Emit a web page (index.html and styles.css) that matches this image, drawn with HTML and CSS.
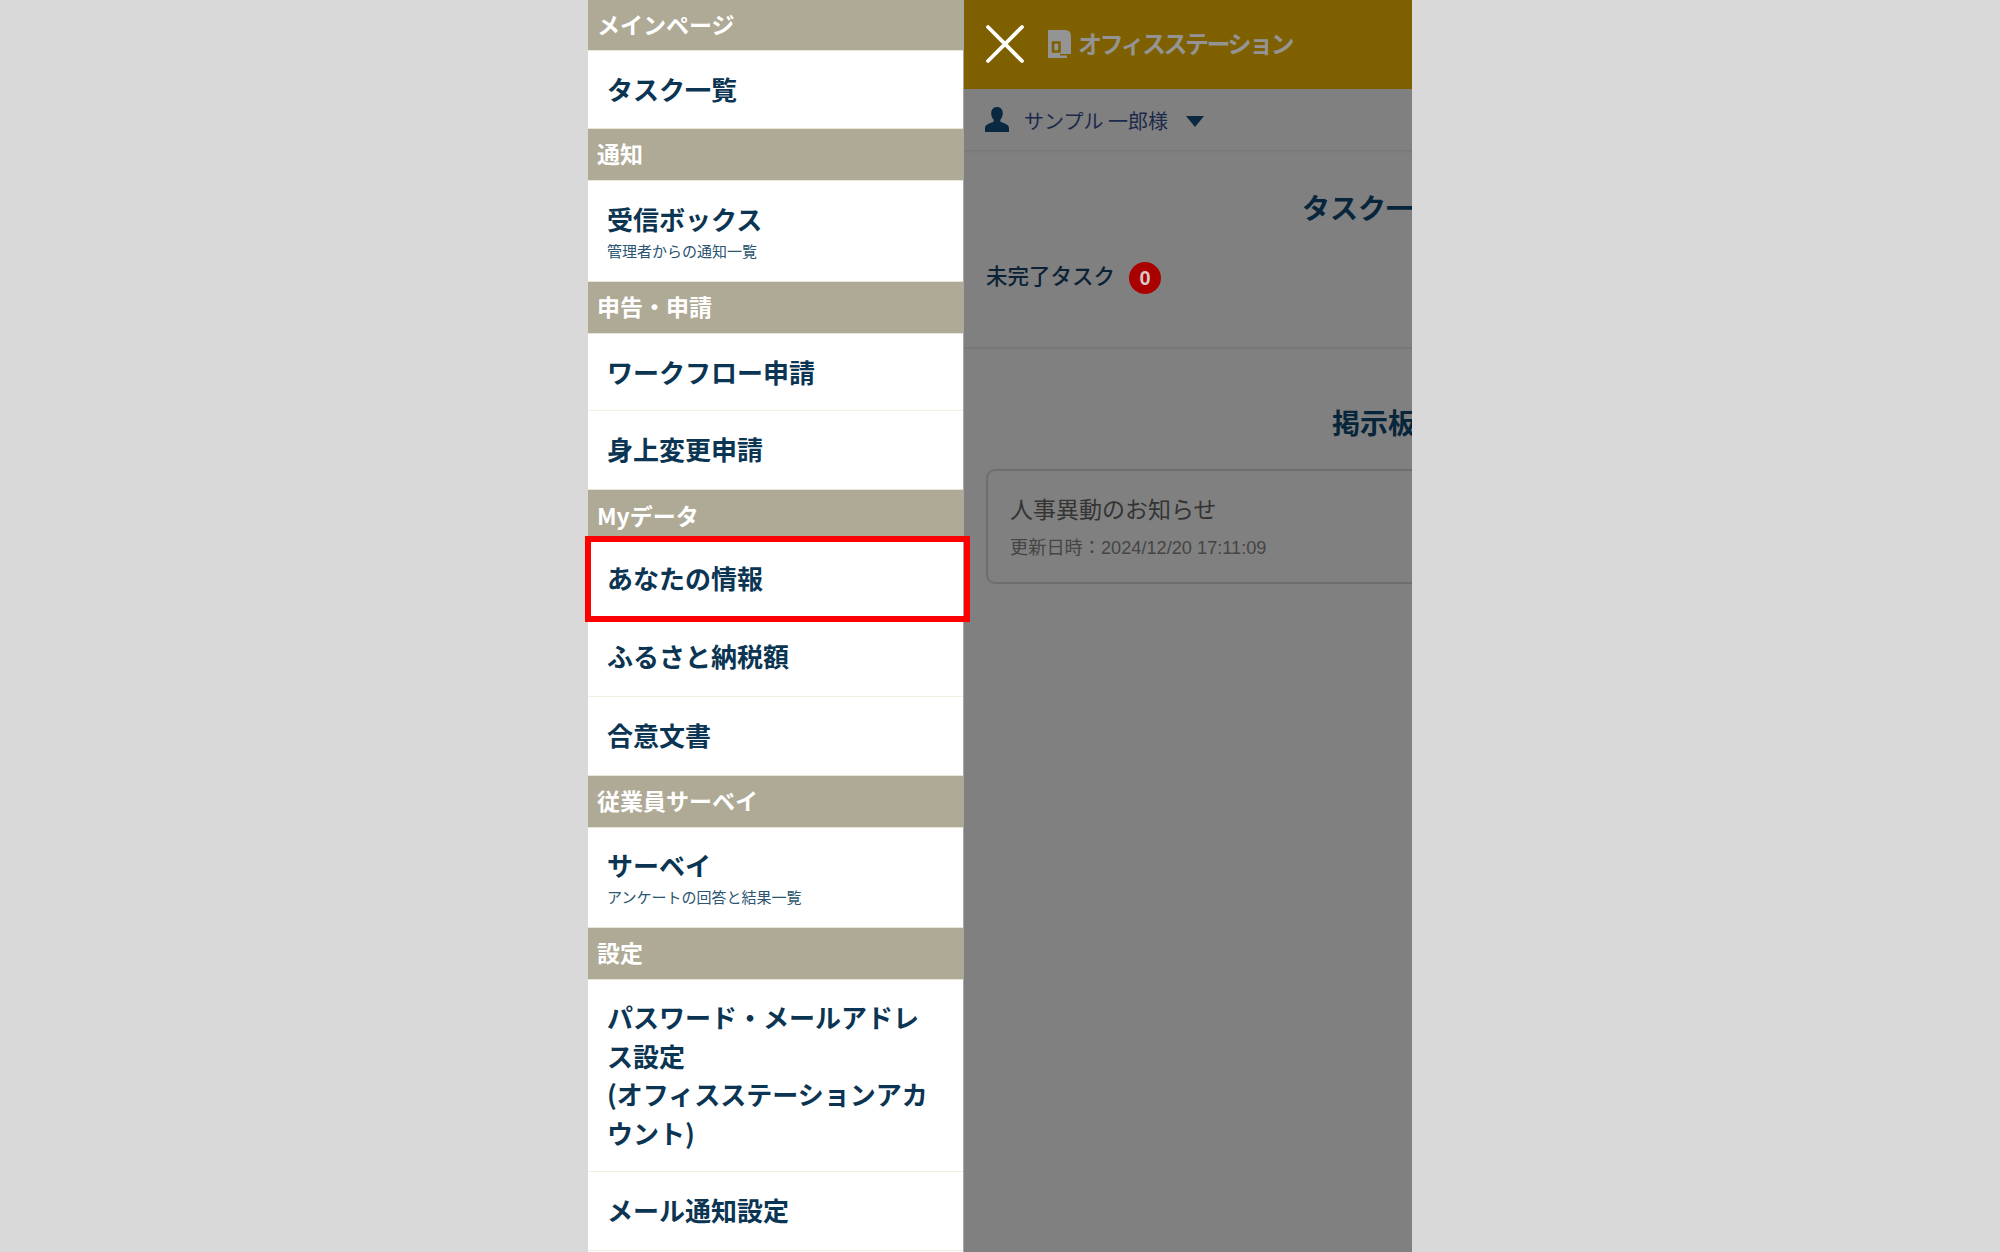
FILE: index.html
```html
<!DOCTYPE html>
<html lang="ja">
<head>
<meta charset="utf-8">
<title>オフィスステーション</title>
<link rel="stylesheet" href="styles.css">
</head>
<body>
<div class="page">
  <nav class="menu">
    <h2 class="sec sec-first">メインページ</h2>
    <a class="item h77">タスク一覧</a>
    <h2 class="sec">通知</h2>
    <a class="item item-sub h100"><span>受信ボックス</span><small>管理者からの通知一覧</small></a>
    <h2 class="sec">申告・申請</h2>
    <a class="item h77">ワークフロー申請</a>
    <a class="item h78">身上変更申請</a>
    <h2 class="sec sec-short">Myデータ</h2>
    <a class="item item-marked">あなたの情報</a>
    <a class="item h78">ふるさと納税額</a>
    <a class="item h78">合意文書</a>
    <h2 class="sec">従業員サーベイ</h2>
    <a class="item item-sub h99"><span>サーベイ</span><small>アンケートの回答と結果一覧</small></a>
    <h2 class="sec">設定</h2>
    <a class="item item-long">パスワード・メールアドレス設定<br>(オフィスステーションアカウント)</a>
    <a class="item h79">メール通知設定</a>
  </nav>
  <main class="main">
    <header class="top">
      <svg class="close" width="40" height="40" viewBox="0 0 40 40"><path d="M3 3L37 37M37 3L3 37" stroke="#fff" stroke-width="3.8" stroke-linecap="round"/></svg>
      <svg class="logo" width="24" height="29" viewBox="0 0 24 29"><path d="M0 0H17Q23 0 23 6V24H19V28H0Z" fill="#949494"/><path d="M5 12.500H11.500V21.500H5Z" fill="none" stroke="#7f6000" stroke-width="2.600"/><path d="M12 24H23V25.500H12Z" fill="#7f6000"/></svg>
      <span class="brand">オフィスステーション</span>
    </header>
    <div class="user">
      <svg class="person" width="24" height="25" viewBox="0 0 24 25"><path d="M12 0c3.600 0 5.800 2.700 5.800 6.200 0 2.800-1.100 5-2.400 6.300v2.300c3 1.300 8.600 2.400 8.600 6.200v4H0v-4c0-3.800 5.600-4.900 8.600-6.200v-2.300C7.300 11.200 6.200 9 6.200 6.200 6.200 2.700 8.400 0 12 0z" fill="#0a2840"/></svg>
      <span class="user-name">サンプル 一郎様</span>
      <svg class="caret" width="18" height="11" viewBox="0 0 18 11"><path d="M0 0h18L9 11z" fill="#0a2840"/></svg>
    </div>
    <div class="content">
      <section class="tasks">
        <h1 class="title">タスク一覧</h1>
        <div class="pending"><span class="pending-label">未完了タスク</span><b class="badge">0</b></div>
      </section>
      <section class="board">
        <h1 class="title">掲示板</h1>
        <div class="card">
          <p class="card-title">人事異動のお知らせ</p>
          <p class="card-date">更新日時：2024/12/20 17:11:09</p>
        </div>
      </section>
    </div>
  </main>
</div>
</body>
</html>
```
FILE: styles.css
```css
*, *::after { box-sizing: border-box; }
html, body { margin: 0; padding: 0; }
body {
  background: #d9d9d9;
  font-family: "Noto Sans CJK JP", "Liberation Sans", sans-serif;
}
.page {
  display: flex;
  height: 1252px;
  overflow: hidden;
  padding-left: 588px;
}
.menu {
  width: 376px;
  flex: none;
  background: #fff;
  border-right: 1px solid #a8a8a8;
}
.sec {
  margin: 0;
  height: 53px;
  padding-left: 9px;
  padding-bottom: 2px;
  display: flex;
  align-items: center;
  background: #aeaa96;
  border-top: 1px solid #e9e5d6;
  border-bottom: 1px solid #e9e5d6;
  color: #fff;
  font-size: 23px;
  font-weight: 700;
  line-height: 1;
}
.sec-first { height: 51px; border-top: 0; }
.sec-short { height: 48px; border-bottom: 0; padding-top: 3px; padding-bottom: 0; }
.item {
  display: flex;
  flex-direction: column;
  justify-content: center;
  padding-left: 19px;
  padding-right: 20px;
  color: #0b3552;
  font-size: 26px;
  font-weight: 700;
  line-height: 38.5px;
  border-bottom: 1px solid #f1eee2;
}
.item:has(+ .sec) { border-bottom: 0; }
.h77 { height: 77px; }
.h78 { height: 78px; padding-bottom: 2px; }
.h79 { height: 79px; padding-bottom: 1px; }
.h99 { height: 99px; padding-bottom: 1px; }
.h100 { height: 100px; }
.item-sub span { line-height: 34px; }
.item-sub small {
  margin-top: 5px;
  font-size: 15px;
  font-weight: 400;
  line-height: 20px;
  color: #2b5570;
}
.item-marked {
  position: relative;
  height: 82px;
  border-bottom: 0;
}
.item-marked::after {
  content: "";
  position: absolute;
  left: -3px;
  right: -7px;
  top: -1px;
  height: 86px;
  border: 6px solid #ff0000;
}
.item-long { height: 192px; display: block; padding-top: 18px; }
.main {
  width: 448px;
  flex: none;
  overflow: hidden;
  background: #808080;
}
.top {
  height: 89px;
  background: #7f6000;
  display: flex;
  align-items: center;
  padding-left: 21px;
}
.close { margin-top: -1px; margin-right: 23px; }
.logo { margin-right: 6px; margin-top: -1px; }
.brand {
  margin-top: -4px;
  color: #949494;
  font-size: 24px;
  font-weight: 700;
  letter-spacing: -2.5px;
  line-height: 1;
}
.user {
  height: 62px;
  display: flex;
  align-items: center;
  padding-left: 21px;
  background: #808080;
  border-bottom: 1px solid #787878;
  box-shadow: 0 1px 2px rgba(0,0,0,.06);
}
.person { margin-right: 15px; }
.user-name {
  margin-top: 2px;
  color: #1b2a4a;
  font-size: 20px;
  line-height: 1;
}
.caret { margin-left: 18px; margin-top: 3px; }
.content { width: 816px; }
.tasks { height: 198px; border-bottom: 2px solid #787878; padding-top: 36px; }
.title {
  margin: 0;
  text-align: center;
  color: #08263b;
  font-size: 28px;
  font-weight: 700;
  line-height: 40px;
}
.pending {
  display: flex;
  align-items: flex-start;
  margin-top: 32px;
  padding-left: 22px;
  color: #0b2236;
  font-size: 21.5px;
  font-weight: 500;
}
.pending-label { line-height: 32px; }
.badge {
  width: 32px;
  height: 32px;
  margin-top: 3px;
  margin-left: 14px;
  border-radius: 50%;
  background: #a90000;
  color: #d8c8c8;
  display: flex;
  align-items: center;
  justify-content: center;
  font-family: "Liberation Sans", sans-serif;
  font-size: 20px;
  font-weight: 700;
}
.board { padding-top: 53px; padding-left: 22px; }
.board .title { margin-left: -18px; }
.card {
  margin-top: 27px;
  height: 115px;
  padding: 21px 22px;
  border: 2px solid #6e6e6e;
  border-radius: 9px;
}
.card-title {
  margin: 0;
  color: #343434;
  font-size: 23px;
  line-height: 32px;
}
.card-date {
  margin: 12px 0 0;
  color: #454545;
  font-family: "Liberation Sans", "Noto Sans CJK JP", sans-serif;
  font-size: 18.2px;
  line-height: 24px;
}
```
